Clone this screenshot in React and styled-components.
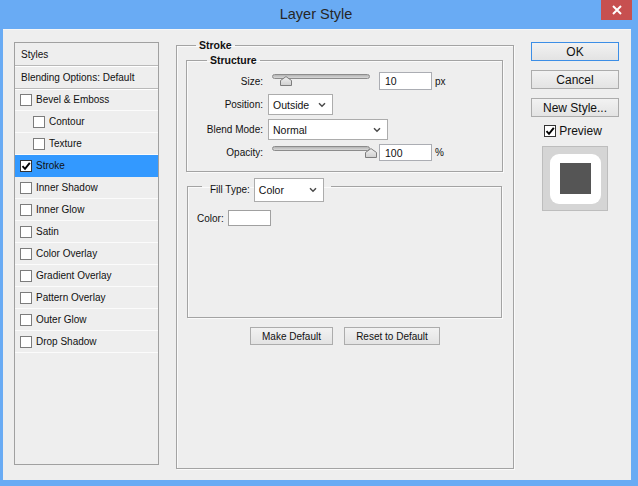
import React from "react";
import styled, { createGlobalStyle } from "styled-components";

const GlobalStyle = createGlobalStyle`
  html, body {
    margin: 0;
    padding: 0;
    background: #69abf4;
  }
  body {
    font-family: "Liberation Sans", Arial, sans-serif;
    color: #111;
  }
`;

const effects = [
  { name: "Bevel & Emboss" },
  { name: "Contour", sub: true },
  { name: "Texture", sub: true },
  { name: "Stroke", checked: true, active: true },
  { name: "Inner Shadow" },
  { name: "Inner Glow" },
  { name: "Satin" },
  { name: "Color Overlay" },
  { name: "Gradient Overlay" },
  { name: "Pattern Overlay" },
  { name: "Outer Glow" },
  { name: "Drop Shadow" },
];

const Window = styled.div`
  width: 638px;
  height: 486px;
  display: flex;
  flex-direction: column;
  background: #69abf4;
`;

const TitleBar = styled.div`
  height: 29px;
  flex: none;
  display: grid;
  grid-template-columns: 1fr auto 1fr;
  padding-right: 6px;
`;

const Title = styled.div`
  align-self: center;
  font-size: 14.5px;
  color: #262626;
  padding-bottom: 1px;
`;

const CloseButton = styled.div`
  justify-self: end;
  width: 31px;
  height: 20px;
  background: #c75050;
  display: flex;
  align-items: center;
  justify-content: center;
`;

const Body = styled.div`
  flex: 1;
  margin: 0 7px 6px 3px;
  background: #eeeeee;
  border-top: 1px solid #f6f6f6;
  display: grid;
  grid-template-columns: 145px 338px 88px;
  column-gap: 17px;
  padding: 9px 12px 0 11px;
  align-items: start;
  font-size: 10px;
`;

/* ---------- left list ---------- */

const StylesPanel = styled.div`
  margin-top: 3px;
  height: 423px;
  box-sizing: border-box;
  border: 1px solid #a0a0a0;
  display: flex;
  flex-direction: column;
`;

const HeaderRow = styled.div`
  height: 23px;
  box-sizing: border-box;
  display: flex;
  align-items: center;
  padding-left: 6px;
  border-bottom: 1px solid #b9b9b9;
  box-shadow: 0 1px 0 #fff;
`;

const EffectRow = styled.div`
  height: 22px;
  box-sizing: border-box;
  display: flex;
  align-items: center;
  gap: 4px;
  padding-left: ${(p) => (p.$sub ? 18 : 5)}px;
  background: ${(p) => (p.$active ? "#3399ff" : "transparent")};
  border-bottom: 1px solid ${(p) => (p.$active ? "#3399ff" : "#fbfbfb")};
`;

const Box = styled.span`
  width: 12px;
  height: 12px;
  box-sizing: border-box;
  flex: none;
  background: #fff;
  border: 1px solid ${(p) => (p.$checked ? "#333" : "#7c7c7c")};
  display: flex;
  align-items: center;
  justify-content: center;
`;

function CheckBox({ checked }) {
  return (
    <Box $checked={checked}>
      {checked && (
        <svg width="10" height="10" viewBox="0 0 10 10">
          <path d="M1.5 5.2 L4 7.8 L8.8 1.8" fill="none" stroke="#000" strokeWidth="1.9" />
        </svg>
      )}
    </Box>
  );
}

/* ---------- middle group boxes ---------- */

const Group = styled.fieldset`
  margin: 0;
  padding: 0;
  min-width: 0;
  box-sizing: border-box;
  border: 1px solid #a3a3a3;
  box-shadow: inset 1px 1px 0 #fafafa, 1px 1px 0 #fafafa;
`;

const StrokeGroup = styled(Group)`
  height: 430px;
`;

const StructureGroup = styled(Group)`
  margin: 3px 10px 0 9px;
  padding: 6px 0 10px 0;
`;

const FillGroup = styled(Group)`
  margin: 6px 11px 0 10px;
  height: 140px;
  padding: 16px 0 0 9px;
`;

const Legend = styled.legend`
  margin-left: ${(p) => p.$indent}px;
  padding: 0 3px;
  font-weight: bold;
  font-size: 10.5px;
  line-height: 12px;
`;

const FillLegend = styled.legend`
  margin-left: 5px;
  padding: 0 7px 0 8px;
  height: 16px;
  display: flex;
  align-items: flex-start;
  gap: 4px;
`;

const Rows = styled.div`
  display: grid;
  row-gap: 4px;
`;

const Row = styled.div`
  height: ${(p) => p.$h}px;
  display: flex;
  align-items: center;
`;

const Label = styled.span`
  width: 76px;
  margin-right: 5px;
  text-align: right;
  flex: none;
`;

const Slider = styled.div`
  position: relative;
  width: 98px;
  align-self: stretch;
  margin: 0 9px 0 4px;
  padding-top: 2px;
  box-sizing: border-box;
`;

const Track = styled.div`
  height: 5px;
  box-sizing: border-box;
  border: 1px solid #8c8c8c;
  border-radius: 3px;
  background: linear-gradient(#b4b4b4, #d8d8d8);
`;

const Thumb = styled.svg`
  position: absolute;
  top: 4px;
`;

const NumInput = styled.input`
  box-sizing: border-box;
  width: 53px;
  height: 100%;
  margin: 0 3px 0 0;
  padding: 0 0 0 5px;
  border: 1px solid #abadb3;
  background: #fff;
  font: 10.5px "Liberation Sans", Arial, sans-serif;
  color: #111;
  outline: none;
`;

const SelectBox = styled.div`
  box-sizing: border-box;
  width: ${(p) => p.$w}px;
  height: ${(p) => p.$h}px;
  flex: none;
  display: flex;
  align-items: center;
  justify-content: space-between;
  padding: 0 6px 0 4px;
  background: #fff;
  border: 1px solid #acacac;
  font-size: 10.5px;
`;

function Select({ value, w, h = 21 }) {
  return (
    <SelectBox $w={w} $h={h}>
      <span>{value}</span>
      <svg width="8" height="6" viewBox="0 0 8 6">
        <path d="M1 1.2 L4 4.2 L7 1.2" fill="none" stroke="#4a4a4a" strokeWidth="1.5" />
      </svg>
    </SelectBox>
  );
}

function RangeSlider({ value, min, max }) {
  const left = 5 + ((value - min) / (max - min)) * 88;
  return (
    <Slider>
      <Track />
      <Thumb width="12" height="10" viewBox="0 0 12 10" style={{ left }}>
        <defs>
          <linearGradient id="tg" x1="0" y1="0" x2="0" y2="1">
            <stop offset="0" stopColor="#f2f2f2" />
            <stop offset="1" stopColor="#cfcfcf" />
          </linearGradient>
        </defs>
        <polygon
          points="0.5,9.5 0.5,4.5 6,0.6 11.5,4.5 11.5,9.5"
          fill="url(#tg)"
          stroke="#7d7d7d"
        />
      </Thumb>
    </Slider>
  );
}

const FillLabel = styled.span`
  line-height: 24px;
`;

const ColorRow = styled.div`
  display: flex;
  align-items: center;
  gap: 4px;
`;

const Swatch = styled.div`
  width: 43px;
  height: 16px;
  box-sizing: border-box;
  background: #fff;
  border: 1px solid #a0a0a0;
`;

const ButtonRow = styled.div`
  margin-top: 9px;
  display: flex;
  justify-content: center;
  gap: 11px;
`;

const Button = styled.button`
  box-sizing: border-box;
  width: ${(p) => p.$w}px;
  height: ${(p) => p.$h || 18}px;
  margin: 0;
  padding: 0;
  border: 1px solid ${(p) => (p.$focus ? "#3c8ee6" : "#acacac")};
  background: linear-gradient(#f2f2f2, #e3e3e3);
  font: ${(p) => p.$size || 10}px "Liberation Sans", Arial, sans-serif;
  color: #111;
`;

/* ---------- right column ---------- */

const Side = styled.div`
  margin-top: 3px;
  display: flex;
  flex-direction: column;
  align-items: center;
  gap: 9px;
`;

const PreviewToggle = styled.div`
  margin-top: -2px;
  margin-left: -4px;
  display: flex;
  align-items: center;
  gap: 3px;
  font-size: 12px;
  height: 13px;
`;

const Thumbnail = styled.div`
  width: 66px;
  height: 65px;
  box-sizing: border-box;
  border: 1px solid #bdbdbd;
  background: #d5d5d5;
  display: flex;
  align-items: center;
  justify-content: center;
`;

const Frame = styled.div`
  width: 51px;
  height: 50px;
  border-radius: 9px;
  background: #fff;
  display: flex;
  align-items: center;
  justify-content: center;
`;

const Square = styled.div`
  width: 31px;
  height: 31px;
  background: #555555;
`;

export default function App() {
  return (
    <>
      <GlobalStyle />
      <Window>
        <TitleBar>
          <span />
          <Title>Layer Style</Title>
          <CloseButton>
            <svg width="10" height="10" viewBox="0 0 10 10">
              <path d="M1 1 L9 9 M9 1 L1 9" stroke="#fff" strokeWidth="2" />
            </svg>
          </CloseButton>
        </TitleBar>

        <Body>
          <StylesPanel>
            <HeaderRow>Styles</HeaderRow>
            <HeaderRow>Blending Options: Default</HeaderRow>
            {effects.map((e) => (
              <EffectRow key={e.name} $sub={e.sub} $active={e.active}>
                <CheckBox checked={e.checked} />
                {e.name}
              </EffectRow>
            ))}
          </StylesPanel>

          <StrokeGroup>
            <Legend $indent={19}>Stroke</Legend>
            <StructureGroup>
              <Legend $indent={20}>Structure</Legend>
              <Rows>
                <Row $h={18}>
                  <Label>Size:</Label>
                  <RangeSlider value={10} min={1} max={250} />
                  <NumInput readOnly value="10" />
                  <span>px</span>
                </Row>
                <Row $h={21}>
                  <Label>Position:</Label>
                  <Select value="Outside" w={65} />
                </Row>
                <Row $h={21}>
                  <Label>Blend Mode:</Label>
                  <Select value="Normal" w={120} />
                </Row>
                <Row $h={17}>
                  <Label>Opacity:</Label>
                  <RangeSlider value={100} min={0} max={100} />
                  <NumInput readOnly value="100" />
                  <span>%</span>
                </Row>
              </Rows>
            </StructureGroup>

            <FillGroup>
              <FillLegend>
                <FillLabel>Fill Type:</FillLabel>
                <Select value="Color" w={70} h={24} />
              </FillLegend>
              <ColorRow>
                <span>Color:</span>
                <Swatch />
              </ColorRow>
            </FillGroup>

            <ButtonRow>
              <Button $w={83}>Make Default</Button>
              <Button $w={96}>Reset to Default</Button>
            </ButtonRow>
          </StrokeGroup>

          <Side>
            <Button $w={88} $h={19} $size={12} $focus>
              OK
            </Button>
            <Button $w={88} $h={19} $size={12}>
              Cancel
            </Button>
            <Button $w={88} $h={19} $size={12}>
              New Style...
            </Button>
            <PreviewToggle>
              <CheckBox checked />
              Preview
            </PreviewToggle>
            <Thumbnail>
              <Frame>
                <Square />
              </Frame>
            </Thumbnail>
          </Side>
        </Body>
      </Window>
    </>
  );
}
